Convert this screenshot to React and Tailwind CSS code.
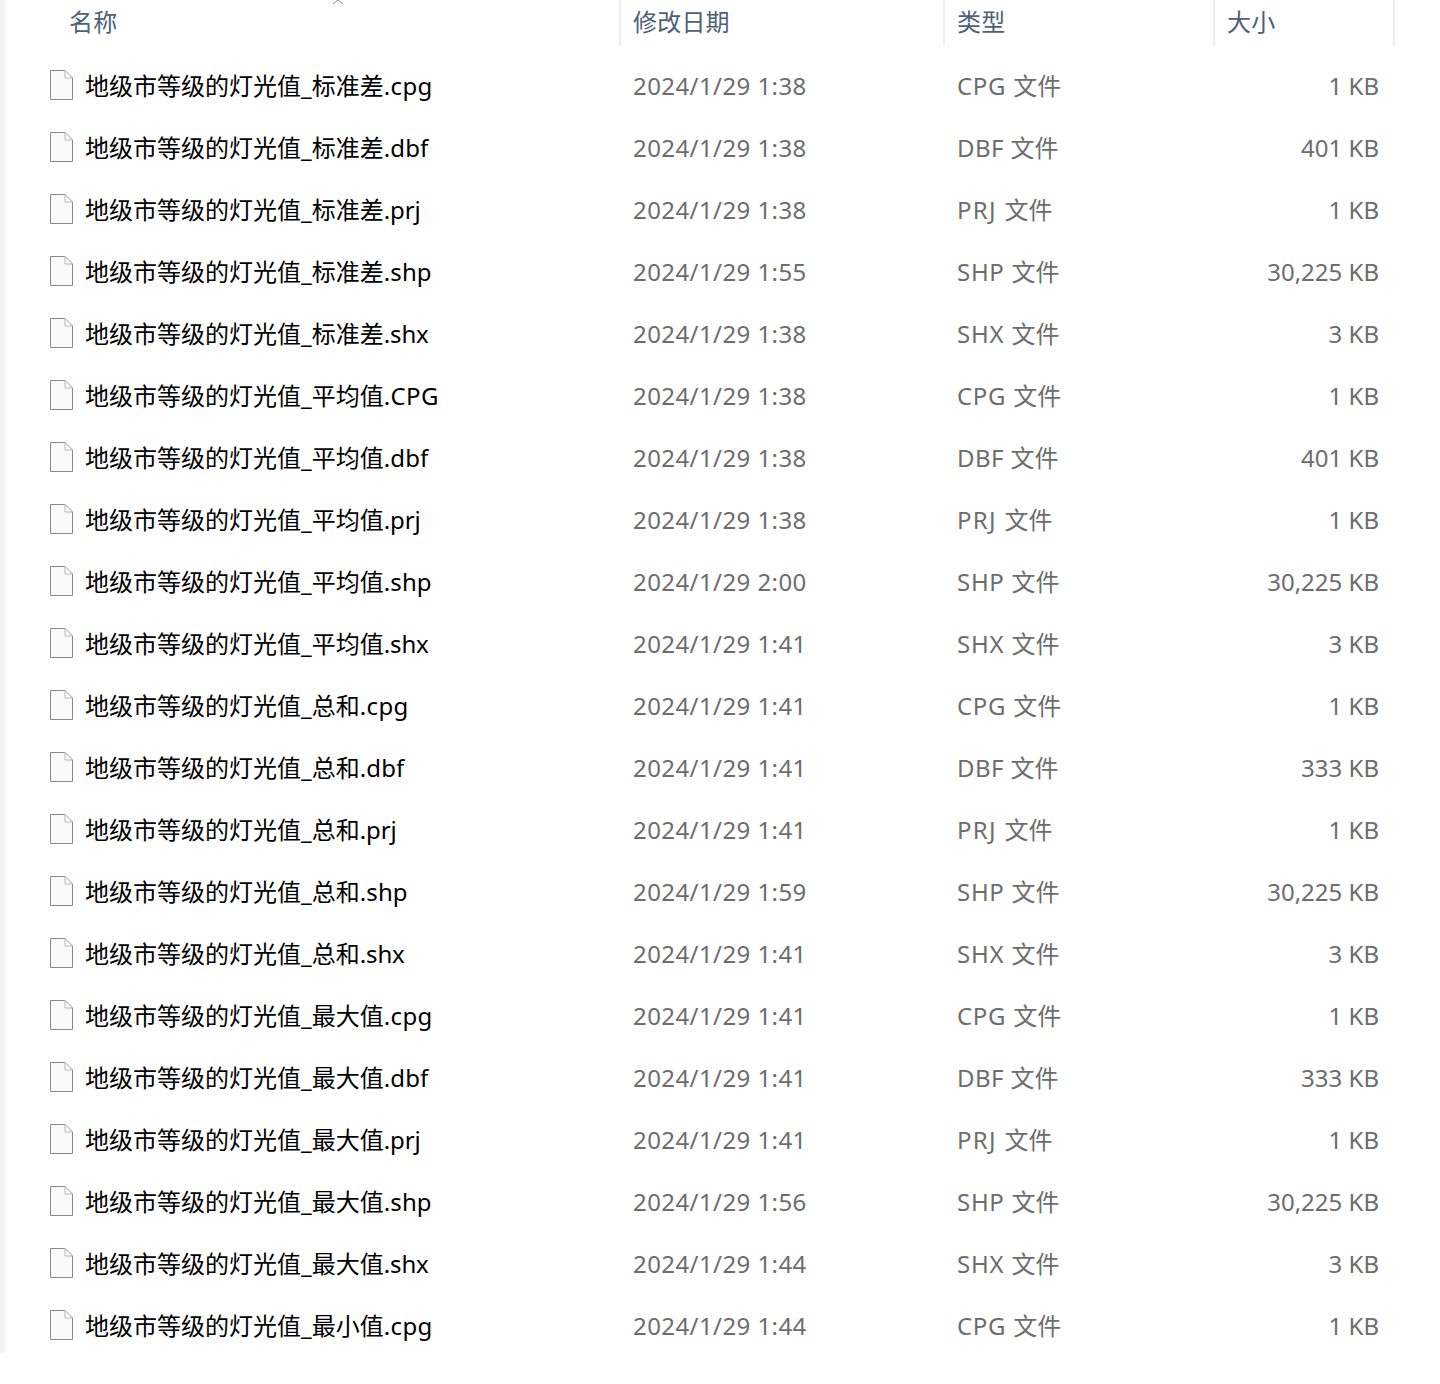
const N = '地级市等级的灯光值_';
const rows = [
  ['标准差','.cpg','2024/1/29 1:38','CPG 文件','1 KB'],
  ['标准差','.dbf','2024/1/29 1:38','DBF 文件','401 KB'],
  ['标准差','.prj','2024/1/29 1:38','PRJ 文件','1 KB'],
  ['标准差','.shp','2024/1/29 1:55','SHP 文件','30,225 KB'],
  ['标准差','.shx','2024/1/29 1:38','SHX 文件','3 KB'],
  ['平均值','.CPG','2024/1/29 1:38','CPG 文件','1 KB'],
  ['平均值','.dbf','2024/1/29 1:38','DBF 文件','401 KB'],
  ['平均值','.prj','2024/1/29 1:38','PRJ 文件','1 KB'],
  ['平均值','.shp','2024/1/29 2:00','SHP 文件','30,225 KB'],
  ['平均值','.shx','2024/1/29 1:41','SHX 文件','3 KB'],
  ['总和','.cpg','2024/1/29 1:41','CPG 文件','1 KB'],
  ['总和','.dbf','2024/1/29 1:41','DBF 文件','333 KB'],
  ['总和','.prj','2024/1/29 1:41','PRJ 文件','1 KB'],
  ['总和','.shp','2024/1/29 1:59','SHP 文件','30,225 KB'],
  ['总和','.shx','2024/1/29 1:41','SHX 文件','3 KB'],
  ['最大值','.cpg','2024/1/29 1:41','CPG 文件','1 KB'],
  ['最大值','.dbf','2024/1/29 1:41','DBF 文件','333 KB'],
  ['最大值','.prj','2024/1/29 1:41','PRJ 文件','1 KB'],
  ['最大值','.shp','2024/1/29 1:56','SHP 文件','30,225 KB'],
  ['最大值','.shx','2024/1/29 1:44','SHX 文件','3 KB'],
  ['最小值','.cpg','2024/1/29 1:44','CPG 文件','1 KB'],
];
const extTrack = {
  '.cpg': 'tracking-[0.4px]',
  '.CPG': 'tracking-[0.4px]',
  '.dbf': 'tracking-[0.15px]',
  '.prj': 'tracking-[-0.1px]',
  '.shp': 'tracking-[0.15px]',
  '.shx': 'tracking-[-0.1px]',
};
const typeTrack = {
  CPG: 'tracking-[0.7px]',
  DBF: 'tracking-[0.4px]',
  PRJ: 'tracking-[1.3px]',
  SHP: 'tracking-[0.7px]',
  SHX: 'tracking-[0.8px]',
};
function FileIcon() {
  return (
    <svg width="23" height="30" viewBox="0 0 23 30" className="shrink-0 -translate-y-px">
      <path d="M0.5 0.5H15L22.5 8V29.5H0.5Z" fill="#fafafa" stroke="#8a8a8a" />
      <path d="M15 0.5V8H22.5Z" fill="#ffffff" stroke="#b5b5b5" />
    </svg>
  );
}
export default function App() {
  return (
    <div className="relative w-[1440px] h-[1384px] bg-white overflow-hidden font-['Noto_Sans','Noto_Sans_CJK_SC',sans-serif] text-[24px]">
      <div className="w-[1395px] h-[1353px] border-l-[5px] border-[#f3f3f3]">
        <div className="relative h-[46px] flex text-[#4c607a] leading-[44px] tracking-[0.2px]">
          <svg width="12" height="5" viewBox="0 0 12 5" className="absolute left-[327px] top-0"><path d="M1 4L6 0M11 4L6 0" fill="none" stroke="#8a8a8a" /></svg>
          <div className="w-[616px] pl-[64px] border-r-[2px] border-[#efefef]">名称</div>
          <div className="w-[324px] pl-[12px] border-r-[2px] border-[#efefef]">修改日期</div>
          <div className="w-[270px] pl-[12px] border-r-[2px] border-[#efefef]">类型</div>
          <div className="w-[180px] pl-[12px] border-r-[2px] border-[#efefef]">大小</div>
        </div>
        <div className="pt-[9px]">
          {rows.map((r, i) => {
            const [ty, wen] = r[3].split(' ');
            return (
              <div key={i} className="flex items-center h-[62px] leading-[62px]">
                <div className="w-[628px] flex items-center pl-[45px] gap-[12px] text-black whitespace-nowrap">
                  <FileIcon />
                  <span>{N + r[0]}<span className={extTrack[r[1]]}>{r[1]}</span></span>
                </div>
                <div className="w-[324px] text-[#6d6d6d] whitespace-nowrap tracking-[0.42px]">{r[2]}</div>
                <div className="w-[270px] text-[#6d6d6d] whitespace-nowrap">
                  <span className={typeTrack[ty]}>{ty} </span>{wen}
                </div>
                <div className="w-[152px] text-right text-[#6d6d6d] whitespace-nowrap">{r[4]}</div>
              </div>
            );
          })}
        </div>
      </div>
    </div>
  );
}
